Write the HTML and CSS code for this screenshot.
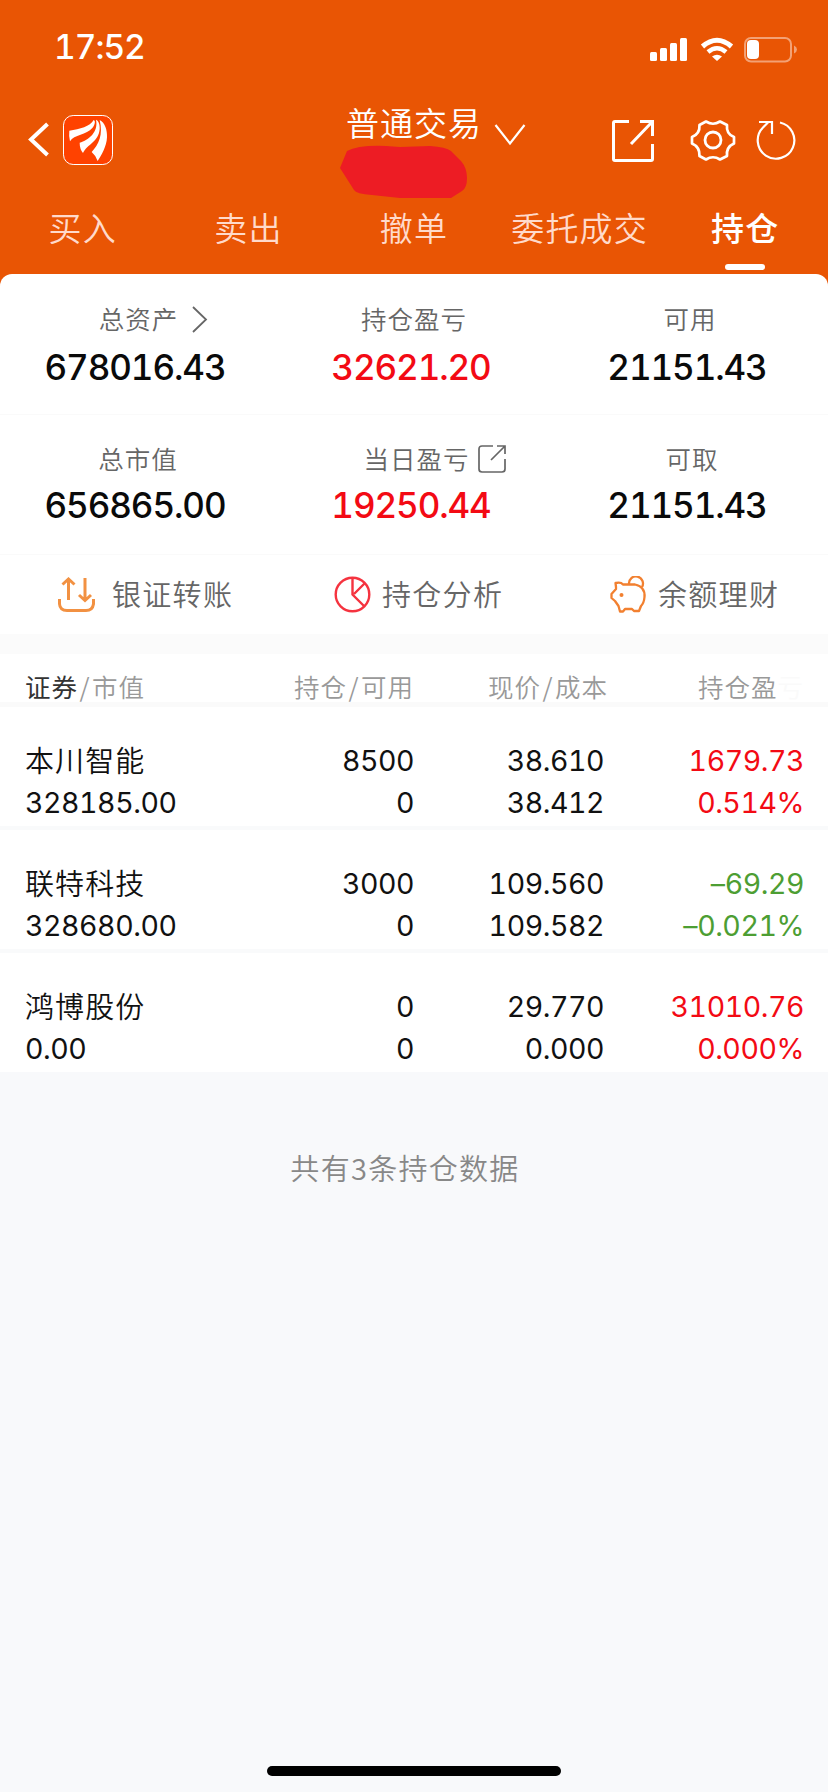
FILE: index.html
```html
<!DOCTYPE html>
<html lang="zh-CN">
<head>
<meta charset="utf-8">
<title>持仓</title>
<link rel="stylesheet" href="styles.css">
</head>
<body>
<div class="app">
  <header class="top">
    <div class="status">
      <span class="time">17:52</span>
      <svg class="status-icons" width="148" height="26" viewBox="650 37 148 26">
        <g fill="#fff"><rect x="650" y="52" width="7" height="9" rx="1.5"/><rect x="660" y="48" width="7" height="13" rx="1.5"/><rect x="670" y="43" width="7" height="18" rx="1.5"/><rect x="680" y="38" width="7" height="23" rx="1.5"/></g>
        <path d="M702.500 46.500Q717 34 731.500 46.500" fill="none" stroke="#fff" stroke-width="5"/>
        <path d="M708 52Q717 44.500 726 52" fill="none" stroke="#fff" stroke-width="4.500"/>
        <path d="M712 56.500Q717 53 722 56.500L717 61Z" fill="#fff"/>
        <rect x="745" y="38" width="46" height="23.500" rx="6" fill="none" stroke="#fff" stroke-opacity=".45" stroke-width="2"/>
        <rect x="747" y="40" width="12" height="19" rx="4" fill="#fff"/>
        <path d="M794 45.500Q797 47 797 49.500T794 53.500Z" fill="#fff" fill-opacity=".45"/>
      </svg>
    </div>
    <div class="nav">
      <div class="nav-left">
        <svg width="22" height="38" viewBox="28 120 22 38"><path d="M47.500 124L31 139.500L47.500 155" fill="none" stroke="#fff" stroke-width="4"/></svg>
        <svg width="50" height="50" viewBox="189 345 150 150"><rect x="190.500" y="346.500" width="147" height="147" rx="29" fill="#ff4200" stroke="#fff" stroke-width="3"/><g fill="#fff"><path d="M208 392C240 388 270 379 281 360C288 362 284 376 277 384C260 404 222 404 210 424Q206 408 208 392Z"/><path d="M288 359C296 362 300 374 299 387C296 426 262 432 249 459Q239 447 239 428C266 420 296 396 288 359Z"/><path d="M299 360C315 368 322 390 321 412C320 440 304 466 293 483Q286 465 275 456C296 434 310 404 299 360Z"/></g></svg>
      </div>
      <div class="account">
        <div class="account-title"><span>普通交易</span><svg width="32" height="24" viewBox="493 124 32 24"><path d="M494.500 126L509 144.500L523.500 126" fill="none" stroke="#fff" stroke-width="2.200"/></svg></div>
        <svg class="mask" width="128" height="54" viewBox="340 145 128 54"><path d="M340 168L347 151Q358 145 386 146L400 147L430 146Q446 147 451 151L461 161Q467 168 467 178Q467 188 462 191L451 198H400L372 195Q356 194 354 190Z" fill="#ed1c24"/></svg>
      </div>
      <div class="nav-right">
        <svg width="44" height="44" viewBox="611 119 44 44"><path d="M629 121.500H615Q613.500 121.500 613.500 123V159Q613.500 160.500 615 160.500H651Q652.500 160.500 652.500 159V144M640 121.500H652.500V136M652 122L631 144" fill="none" stroke="#fff" stroke-width="3"/></svg>
        <svg width="46" height="46" viewBox="690 117 46 46"><path d="M699.500 125L706 121.500Q713 126 720 121.500L727 125Q726 134 734 137V143.500Q726 147 727 156L720 159.500Q713 155 706 159.500L699.500 156Q700 147 692 143.500V137Q700 134 699.500 125Z" fill="none" stroke="#fff" stroke-width="2.700" stroke-linejoin="round"/><circle cx="713" cy="140" r="8" fill="none" stroke="#fff" stroke-width="2.800"/></svg>
        <svg width="42" height="42" viewBox="755 119 42 42"><path d="M780 122.500A18.300 18.300 0 1 1 763 127.500L768 122.500M759 122H772V134" fill="none" stroke="#fff" stroke-width="2.200"/></svg>
      </div>
    </div>
    <nav class="tabs">
      <span class="tab">买入</span><span class="tab">卖出</span><span class="tab">撤单</span><span class="tab">委托成交</span><span class="tab active">持仓</span>
    </nav>
  </header>

  <section class="card">
    <div class="summary">
      <div class="cell"><div class="label with-arrow">总资产<svg width="16" height="28" viewBox="0 0 16 28"><path d="M1 1L14 13.500L1 26" fill="none" stroke="#666" stroke-width="1.800"/></svg></div><div class="value">678016.43</div></div>
      <div class="cell"><div class="label">持仓盈亏</div><div class="value up">32621.20</div></div>
      <div class="cell"><div class="label">可用</div><div class="value">21151.43</div></div>
    </div>
    <div class="summary second">
      <div class="cell"><div class="label">总市值</div><div class="value">656865.00</div></div>
      <div class="cell"><div class="label with-link">当日盈亏<svg width="28" height="28" viewBox="0 0 28 28"><path d="M15 1H4Q1 1 1 4V24Q1 27 4 27H24Q27 27 27 24V14M19 1H27V9M27 1L13 15" fill="none" stroke="#666" stroke-width="1.700"/></svg></div><div class="value up">19250.44</div></div>
      <div class="cell"><div class="label shift">可取</div><div class="value">21151.43</div></div>
    </div>
    <div class="actions">
      <div class="action transfer"><svg width="37" height="36" viewBox="0 0 37 36"><path d="M10.500 23V2M4.500 7.500L10.500 2L16.500 7.500M27 1V23M21 18L27 23.500L33 18M1.500 22V27Q2 33.500 9 33.500H28Q34.500 33.500 35.500 27V22" fill="none" stroke="#f29142" stroke-width="3"/></svg><span>银证转账</span></div>
      <div class="action analysis"><svg width="37" height="37" viewBox="0 0 37 37"><g fill="none" stroke="#f5333f" stroke-width="2.400"><circle cx="18.500" cy="18.500" r="16.800"/><path d="M18.500 2V18.500L30 30M20 18L31 7"/></g></svg><span>持仓分析</span></div>
      <div class="action finance"><svg width="37" height="37" viewBox="0 0 37 37"><g fill="none" stroke="#f28030" stroke-width="2.300" stroke-linejoin="round"><path d="M6 7Q11 6 13 8.500H25C32 10 35 15 34.500 21Q34 27 31 30L29 35H24L22 33H15L13 35.500H10L8.500 30L5 25L1.500 22V18L6 13V11L5.500 7Z"/><path d="M19 8A7 7 0 1 1 32 11"/></g><circle cx="11.500" cy="19" r="2" fill="#f28030"/></svg><span>余额理财</span></div>
    </div>
  </section>

  <section class="holdings">
    <div class="thead"><span><b>证券</b><i>/</i>市值</span><span>持仓<i>/</i>可用</span><span class="price">现价<i>/</i>成本</span><span>持仓盈<em>亏</em></span></div>
    <div class="row">
      <div><span class="name">本川智能</span><span>328185.00</span></div><div><span>8500</span><span>0</span></div><div><span>38.610</span><span>38.412</span></div><div class="up"><span>1679.73</span><span class="pct">0.514%</span></div>
    </div>
    <div class="row">
      <div><span class="name">联特科技</span><span>328680.00</span></div><div><span>3000</span><span>0</span></div><div><span>109.560</span><span>109.582</span></div><div class="down"><span>–69.29</span><span class="pct">–0.021%</span></div>
    </div>
    <div class="row">
      <div><span class="name">鸿博股份</span><span>0.00</span></div><div><span>0</span><span>0</span></div><div><span>29.770</span><span>0.000</span></div><div class="up"><span>31010.76</span><span class="pct">0.000%</span></div>
    </div>
  </section>
  <p class="count">共有3条持仓数据</p>
  <div class="home"></div>
</div>
</body>
</html>
```
FILE: styles.css
```css
* { box-sizing: border-box; }
body { margin: 0; background: #f8f9fb; font-family: "Noto Sans CJK SC", sans-serif; font-weight: 350; }
svg { display: block; flex: none; }
i, em { font-style: normal; }
.app { width: 828px; height: 1792px; display: flex; flex-direction: column; overflow: hidden; }
.top { height: 286px; margin-bottom: -12px; background: #e95504; color: #fff; flex: none; }
.status { height: 94px; display: flex; justify-content: space-between; padding: 0 30px 0 54px; }
.time { font: 500 33.500px/94px Inter, sans-serif; letter-spacing: -1px; font-feature-settings: "tnum"; }
.status-icons { margin-top: 37px; }
.nav { height: 106px; display: grid; grid-template-columns: 312px 1fr 217px; }
.nav-left { display: flex; gap: 13px; padding: 21px 0 0 28px; }
.nav-left svg:first-child { margin-top: 5px; }
.account { padding: 5px 0 0 28px; }
.account-title { display: flex; align-items: center; height: 46px; padding-left: 6px; gap: 12px; font-size: 33px; letter-spacing: 1px; white-space: nowrap; }
.account-title svg { margin-top: 26px; }
.nav-right { display: flex; align-items: flex-start; padding-top: 25px; }
.nav-right svg:nth-child(2) { margin: -2px 19px 0 35px; }
.tabs { height: 74px; display: grid; grid-template-columns: repeat(5, 1fr); }
.tab { display: flex; justify-content: center; font-size: 33px; line-height: 55px; letter-spacing: 1.200px; color: #ffdacb; white-space: nowrap; }
.active { position: relative; color: #fff; font-weight: 500; }
.active::after { content: ""; position: absolute; left: 63px; top: 64px; width: 40px; height: 6px; border-radius: 3px; background: #fff; }
.card { height: 360px; background: #fff; border-radius: 12px 12px 0 0; flex: none; }
.summary { height: 141px; padding-top: 27px; border-bottom: 1px solid #fafafa; display: grid; grid-template-columns: repeat(3, 276px); }
.second { height: 140px; padding-top: 25px; }
.label { height: 38px; padding-bottom: 6px; display: flex; justify-content: center; align-items: center; font-size: 25.500px; letter-spacing: 1px; color: #666; }
.label svg { margin-top: 6px; }
.with-arrow { padding-left: 31px; }
.with-arrow svg { margin-left: 14px; }
.second .label { padding-bottom: 4px; }
.with-link { padding-left: 41px; }
.with-link svg { margin: 4px 0 0 8px; }
.shift { padding-left: 4px; }
.value { height: 50px; padding-right: 6px; text-align: center; font: 500 35px/56px Inter, sans-serif; font-feature-settings: "tnum"; letter-spacing: -1.100px; color: #0a0a0a; }
.second .value { line-height: 54px; }
.value.up { color: #f30a14; }
.actions { height: 79px; display: grid; grid-template-columns: repeat(3, 276px); font-size: 29px; color: #666; }
.action { display: flex; align-items: center; letter-spacing: 1.300px; gap: 11px; padding-left: 58px; white-space: nowrap; }
.action span { padding-bottom: 4px; }
.transfer { gap: 17px; }
.holdings { border-top: 20px solid #fbfbfb; background: #fff; flex: none; }
.thead, .row { display: grid; grid-template-columns: 252px 162px 190px 200px 24px; text-align: right; }
.thead > :first-child, .row > :first-child { text-align: left; padding-left: 25px; }
.thead { height: 53px; padding-top: 18px; border-bottom: 5px solid #fafafa; font-size: 25.500px; line-height: 28px; letter-spacing: 1px; color: #999; white-space: nowrap; }
.thead b { font-weight: 400; color: #333; }
.thead i { margin: 0 1.500px; }
.thead em { color: #fafafa; }
.thead .price { margin-right: -4px; }
.row { height: 123px; padding-top: 33px; border-bottom: 4px solid #f9fafb; font: 400 28.500px/42px Inter, sans-serif; font-feature-settings: "tnum"; letter-spacing: -0.450px; color: #111; }
.row:last-child { height: 119px; border: 0; }
.row span { display: block; }
.row .name { margin-bottom: 4px; font: 350 29px/38px "Noto Sans CJK SC", sans-serif; letter-spacing: 1.100px; }
.row .up { color: #f30a14; }
.row .down { color: #4d9e33; }
.count { margin: 74px 18px 0 0; text-align: center; font-size: 29px; line-height: 42px; letter-spacing: 1.300px; color: #888; }
.home { width: 294px; height: 10px; margin: auto auto 16px 267px; border-radius: 5px; background: #000; }
```
